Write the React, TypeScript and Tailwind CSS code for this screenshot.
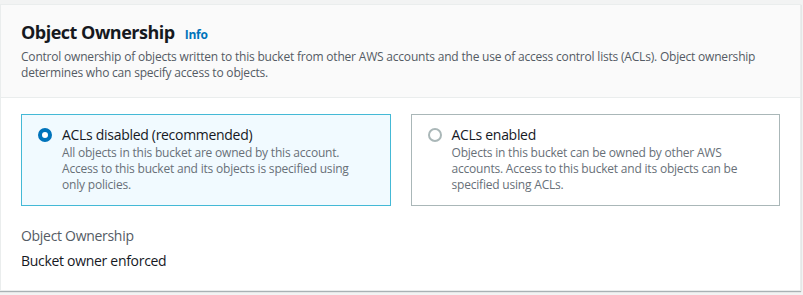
type TTile = {
  title: string;
  description: string;
  selected: boolean;
};

const tiles: TTile[] = [
  {
    title: "ACLs disabled (recommended)",
    description:
      "All objects in this bucket are owned by this account. Access to this bucket and its objects is specified using only policies.",
    selected: true,
  },
  {
    title: "ACLs enabled",
    description:
      "Objects in this bucket can be owned by other AWS accounts. Access to this bucket and its objects can be specified using ACLs.",
    selected: false,
  },
];

function Radio({ checked }: { checked: boolean }) {
  if (checked) {
    return (
      <span className="mt-[3px] block h-[14px] w-[14px] shrink-0 rounded-full border-[4px] border-[#0073bb] bg-white"></span>
    );
  }
  return (
    <span className="mt-[3px] block h-[14px] w-[14px] shrink-0 rounded-full border-2 border-[#aab7b8] bg-white"></span>
  );
}

function Tile({ tile }: { tile: TTile }) {
  return (
    <div
      className={
        tile.selected
          ? "flex h-[92px] gap-[10px] border border-[#44b9d6] bg-[#f1faff] px-[16px] py-[10px]"
          : "flex h-[92px] gap-[10px] border border-[#aab7b8] bg-white px-[16px] py-[10px]"
      }
    >
      <Radio checked={tile.selected} />
      <div className="pr-[20px]">
        <div className="text-[14px] leading-[20px] tracking-[-0.3px] text-[#16191f]">{tile.title}</div>
        <p className="text-[12px] leading-[16px] tracking-[-0.2px] text-[#687078]">{tile.description}</p>
      </div>
    </div>
  );
}

export default function App() {
  return (
    <div className="h-[295px] w-[803px] bg-[#f2f3f3] pt-[4px] font-['Open_Sans',sans-serif]">
      <section className="h-[287px] w-[801px] border border-[#eaeded] bg-white shadow-[0_1px_1px_0_rgba(0,28,36,0.3)]">
        <header className="h-[93px] border-b border-[#eaeded] bg-[#fafafa] px-[20px] pt-[15px]">
          <h2 className="flex items-baseline gap-[10px] text-[18px] font-bold leading-[24px] tracking-[-0.5px] text-[#16191f]">
            Object Ownership
            <a className="text-[12px] font-bold tracking-[-0.2px] text-[#0073bb]" href="#">
              Info
            </a>
          </h2>
          <p className="mt-[2px] text-[12px] leading-[16px] tracking-[-0.2px] text-[#545b64]">
            Control ownership of objects written to this bucket from other AWS accounts and the
            use of access control lists (ACLs). Object ownership determines who can specify
            access to objects.
          </p>
        </header>
        <div className="px-[20px] pt-[16px]">
          <div className="grid grid-cols-2 gap-[20px]">
            {tiles.map((tile) => (
              <Tile key={tile.title} tile={tile} />
            ))}
          </div>
          <div className="mt-[20px] text-[14px] leading-[20px] tracking-[-0.3px] text-[#545b64]">
            Object Ownership
          </div>
          <div className="mt-[5px] text-[14px] leading-[20px] tracking-[-0.3px] text-[#16191f]">
            Bucket owner enforced
          </div>
        </div>
      </section>
    </div>
  );
}
